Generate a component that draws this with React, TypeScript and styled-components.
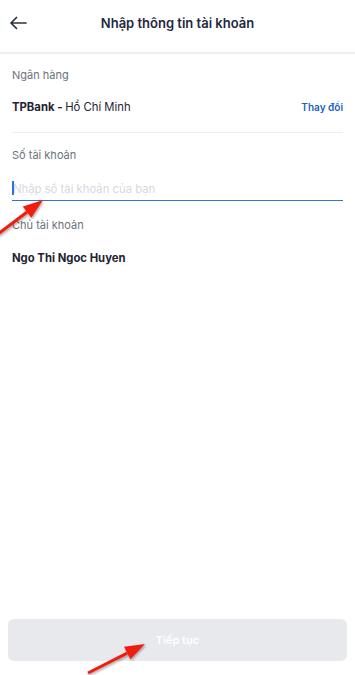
import styled, { createGlobalStyle } from 'styled-components'

const GlobalStyle = createGlobalStyle`
  * { box-sizing: border-box; }
  body {
    margin: 0;
    background: #ffffff;
    font-family: Inter, "Noto Sans", "Liberation Sans", sans-serif;
    -webkit-font-smoothing: antialiased;
  }
`

const Page = styled.div`
  position: relative;
  min-height: 100vh;
  display: flex;
  flex-direction: column;
  background: #fff;
  overflow: hidden;
`

const Header = styled.div`
  height: 54px;
  display: grid;
  grid-template-columns: 40px 1fr 40px;
  align-items: start;
  padding: 14px 0 0 6px;
  border-bottom: 2px solid #efeff1;
`

const BackButton = styled.button`
  background: none;
  border: none;
  padding: 0 0 0 3px;
  height: 18px;
  display: flex;
  align-items: center;
  cursor: pointer;
  color: #2b3240;
`

const Title = styled.h1`
  margin: 0;
  text-align: center;
  font-size: 13px;
  line-height: 18px;
  font-weight: 600;
  color: #1e2840;
  padding-right: 6px;
`

const Content = styled.div`
  padding: 13px 12px 0;
  display: flex;
  flex-direction: column;
`

const Label = styled.div<{ $top?: number }>`
  font-size: 11px;
  line-height: 16px;
  color: #6d727c;
  margin-top: ${(p) => p.$top ?? 0}px;
`

const Row = styled.div<{ $top?: number }>`
  display: flex;
  justify-content: space-between;
  align-items: center;
  margin-top: ${(p) => p.$top ?? 0}px;
  height: 18px;
`

const Value = styled.div<{ $top?: number }>`
  font-size: 11.3px;
  line-height: 18px;
  color: #1f2433;
  margin-top: ${(p) => p.$top ?? 0}px;

  b {
    font-weight: 700;
  }
`

const Link = styled.button`
  background: none;
  border: none;
  padding: 0;
  font-family: inherit;
  font-size: 10px;
  font-weight: 600;
  color: #1d5fc4;
  cursor: pointer;
`

const Divider = styled.div`
  height: 1px;
  background: #eeeff1;
  margin-top: 16px;
`

const InputWrap = styled.div`
  position: relative;
  margin-top: 14px;
  border-bottom: 1px solid #2f74d8;
`

const Input = styled.input`
  width: 100%;
  height: 22px;
  border: none;
  outline: none;
  padding: 0 0 0 1px;
  font-family: inherit;
  font-size: 11.3px;
  color: #1f2433;
  background: transparent;

  &::placeholder {
    color: #d6d9de;
  }
`

const Caret = styled.span`
  position: absolute;
  left: 0;
  top: 4px;
  width: 1.5px;
  height: 14px;
  background: #2f74d8;
`

const Spacer = styled.div`
  flex: 1;
`

const Footer = styled.div`
  padding: 0 8px 14px;
`

const ContinueButton = styled.button`
  width: 100%;
  height: 42px;
  border: none;
  border-radius: 6px;
  background: #e8e9ed;
  color: #ffffff;
  font-family: inherit;
  font-size: 11px;
  font-weight: 600;
`

const Annotations = styled.svg`
  position: absolute;
  left: 0;
  top: 0;
  width: 100%;
  height: 100%;
  pointer-events: none;
`

function BackArrow() {
  return (
    <svg width="18" height="14" viewBox="0 0 18 14" fill="none">
      <path d="M17 7H2M7.5 1.5L2 7l5.5 5.5" stroke="currentColor" strokeWidth="1.7" strokeLinecap="round" strokeLinejoin="round" />
    </svg>
  )
}

function RedArrow({ x1, y1, x2, y2 }: { x1: number; y1: number; x2: number; y2: number }) {
  const ang = Math.atan2(y2 - y1, x2 - x1)
  const len = 20
  const w = 7
  const bx = x2 - Math.cos(ang) * len
  const by = y2 - Math.sin(ang) * len
  const nx = -Math.sin(ang)
  const ny = Math.cos(ang)
  const head = `${x2},${y2} ${bx + nx * w},${by + ny * w} ${bx - nx * w},${by - ny * w}`
  return (
    <g filter="url(#shadow)">
      <line x1={x1} y1={y1} x2={bx} y2={by} stroke="#f01c10" strokeWidth="3" />
      <polygon points={head} fill="#f01c10" />
    </g>
  )
}

export default function App() {
  return (
    <Page>
      <GlobalStyle />
      <Header>
        <BackButton aria-label="Quay lại">
          <BackArrow />
        </BackButton>
        <Title>Nhập thông tin tài khoản</Title>
        <span />
      </Header>

      <Content>
        <Label>Ngân hàng</Label>
        <Row $top={15}>
          <Value>
            <b>TPBank - </b>Hồ Chí Minh
          </Value>
          <Link>Thay đổi</Link>
        </Row>
        <Divider />

        <Label $top={14}>Số tài khoản</Label>
        <InputWrap>
          <Input placeholder="Nhập số tài khoản của bạn" />
          <Caret />
        </InputWrap>

        <Label $top={16}>Chủ tài khoản</Label>
        <Value $top={16}>
          <b>Ngo Thi Ngoc Huyen</b>
        </Value>
      </Content>

      <Spacer />
      <Footer>
        <ContinueButton>Tiếp tục</ContinueButton>
      </Footer>

      <Annotations>
        <defs>
          <filter id="shadow" x="-20%" y="-20%" width="140%" height="140%">
            <feDropShadow dx="1" dy="1.5" stdDeviation="1" floodColor="#000" floodOpacity="0.35" />
          </filter>
        </defs>
        <RedArrow x1={-2} y1={234} x2={43} y2={200} />
        <RedArrow x1={88} y1={673} x2={145} y2={644} />
      </Annotations>
    </Page>
  )
}
